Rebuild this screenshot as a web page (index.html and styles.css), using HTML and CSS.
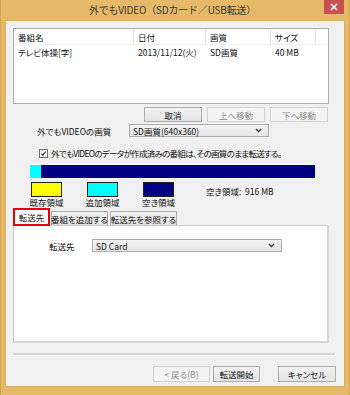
FILE: index.html
```html
<!DOCTYPE html>
<html lang="ja">
<head>
<meta charset="utf-8">
<link rel="stylesheet" href="styles.css">
</head>
<body>
<div class="window">
  <div class="titlebar">
    <div class="spacer"></div>
    <div class="title">外でもVIDEO（SDカード／USB転送）</div>
    <div class="close"><svg width="8" height="8" viewBox="0 0 8 8"><path d="M1 1L7 7M7 1L1 7" stroke="#fff" stroke-width="1.6"/></svg></div>
  </div>
  <div class="client">
    <div class="list">
      <div class="list-head">
        <div class="col c1">番組名</div>
        <div class="col c2">日付</div>
        <div class="col c3">画質</div>
        <div class="col c4">サイズ</div>
        <div class="col c5"></div>
      </div>
      <div class="list-row">
        <div class="col c1">テレビ体操[字]</div>
        <div class="col c2">2013/11/12(火)</div>
        <div class="col c3">SD画質</div>
        <div class="col c4">40 MB</div>
      </div>
    </div>

    <div class="btn-row">
      <div class="btn">取消</div>
      <div class="btn disabled">上へ移動</div>
      <div class="btn disabled">下へ移動</div>
    </div>

    <div class="quality-row">
      <div class="q-label">外でもVIDEOの画質</div>
      <div class="select q-select">
        <span>SD画質(640x360)</span>
        <svg width="7" height="5" viewBox="0 0 7 5"><path d="M1 1L3.5 3.5L6 1" fill="none" stroke="#333" stroke-width="1.3"/></svg>
      </div>
    </div>

    <div class="check-row">
      <span class="checkbox"><svg width="9" height="9" viewBox="0 0 9 9"><path d="M1.8 4.6L3.7 6.5L7.3 2.2" fill="none" stroke="#222" stroke-width="1.5"/></svg></span>
      <span class="check-text">外でもVIDEOのデータが作成済みの番組は、その画質のまま転送する。</span>
    </div>

    <div class="bar"><div class="bar-used"></div></div>

    <div class="legend">
      <div class="legend-item"><div class="swatch yellow"></div><div class="legend-label">既存領域</div></div>
      <div class="legend-item"><div class="swatch cyan"></div><div class="legend-label">追加領域</div></div>
      <div class="legend-item"><div class="swatch navy"></div><div class="legend-label">空き領域</div></div>
      <div class="free">空き領域:&nbsp; 916 MB</div>
    </div>

    <div class="tabs">
      <div class="tab active">転送先</div>
      <div class="tab t2">番組を追加する</div>
      <div class="tab t3">転送先を参照する</div>
    </div>
    <div class="panel">
      <div class="dest-row">
        <div class="d-label">転送先</div>
        <div class="select d-select">
          <span>SD Card</span>
          <svg width="7" height="5" viewBox="0 0 7 5"><path d="M1 1L3.5 3.5L6 1" fill="none" stroke="#333" stroke-width="1.3"/></svg>
        </div>
      </div>
    </div>

    <div class="sep"></div>

    <div class="footer">
      <div class="btn disabled back">&lt; 戻る(B)</div>
      <div class="btn start">転送開始</div>
      <div class="btn cancel">キャンセル</div>
    </div>
  </div>
</div>
</body>
</html>
```

FILE: styles.css
```css
* { box-sizing: border-box; }
html, body { margin: 0; padding: 0; }
body {
  width: 350px;
  height: 395px;
  overflow: hidden;
  font-family: "Noto Sans CJK JP", "Noto Sans", sans-serif;
  font-size: 8.5px;
  font-feature-settings: "palt";
  color: #111;
}
.window {
  width: 350px;
  height: 395px;
  background: #E5B968;
  display: flex;
  flex-direction: column;
  padding: 0 5px 8px 5px;
  border-left: 1px solid #D3A453;
  border-right: 1px solid #D3A453;
}
.titlebar {
  height: 20px;
  display: grid;
  grid-template-columns: 20px 1fr 20px;
}
.title {
  text-align: center;
  font-size: 10px;
  font-feature-settings: normal;
  line-height: 20px;
  color: #3a3a3a;
  padding-right: 5px;
  letter-spacing: -0.2px;
}
.close {
  width: 20px;
  height: 14px;
  background: #C75050;
  display: flex;
  align-items: center;
  justify-content: center;
}
.client {
  flex: 1;
  background: #F0F0F0;
  display: flex;
  flex-direction: column;
  border: 1px solid #D8AE61;
  margin: 0 -1px;
}
.list {
  margin: 7px 0 0 7px;
  width: 316px;
  height: 76px;
  background: #fff;
  border: 1px solid #ABADB3;
}
.list-head, .list-row {
  display: flex;
  height: 16px;
  align-items: center;
}
.list-head { border-bottom: 1px solid #F0F0F0; }
.list-row { height: 14px; }
.col { padding-left: 4px; white-space: nowrap; height: 100%; display: flex; align-items: center; }
.list-head .col { border-right: 1px solid #E5E5E5; }
.c1 { width: 120px; }
.c2 { width: 72px; }
.c3 { width: 65px; }
.c4 { width: 45px; }
.c5 { flex: 1; border-right: none !important; }

.btn {
  height: 15px;
  border: 1px solid #ACACAC;
  background: linear-gradient(#F2F2F2, #E4E4E4);
  display: flex;
  align-items: center;
  justify-content: center;
  color: #111;
}
.btn.disabled {
  border-color: #D0D0D0;
  background: #F4F4F4;
  color: #8A8A8A;
}
.btn-row {
  display: flex;
  justify-content: flex-end;
  gap: 5px;
  padding-right: 16px;
  margin-top: 3px;
}
.btn-row .btn { width: 58px; }

.quality-row {
  display: flex;
  align-items: center;
  margin-top: 2px;
  height: 13px;
}
.q-label { width: 123px; padding-left: 31px; }
.select {
  height: 13px;
  border: 1px solid #ACACAC;
  background: linear-gradient(#F3F3F3, #E6E6E6);
  display: flex;
  align-items: center;
  justify-content: space-between;
  padding: 0 6px 0 3px;
}
.q-select { width: 140px; }

.check-row {
  display: flex;
  align-items: center;
  gap: 3px;
  margin-top: 10px;
  height: 12px;
  padding-left: 33px;
}
.check-text { letter-spacing: -0.7px; white-space: nowrap; }
.checkbox {
  width: 9px;
  height: 9px;
  border: 1px solid #707070;
  background: #fff;
  display: flex;
  align-items: center;
  justify-content: center;
}
.checkbox svg { display: block; }

.bar {
  margin: 5px 0 0 24px;
  width: 285px;
  height: 15px;
  background: #000080;
  border-top: 1px solid #fff;
  border-bottom: 1px solid #fff;
  display: flex;
}
.bar-used { width: 11px; background: #00FFFF; }

.legend {
  display: flex;
  gap: 21px;
  padding-left: 23px;
  margin-top: 3px;
  height: 26px;
}
.legend-item {
  width: 35px;
  display: flex;
  flex-direction: column;
  align-items: center;
}
.swatch { width: 31px; height: 15px; border: 1px solid #222; }
.yellow { background: #FFFF00; }
.cyan { background: #00FFFF; }
.navy { background: #000080; }
.legend-label { line-height: 11px; white-space: nowrap; }
.free { margin: 3px 0 0 9px; white-space: nowrap; }

.tabs {
  display: flex;
  align-items: flex-end;
  margin: 0 0 -1px 7px;
  height: 18px;
}
.tab {
  height: 15px;
  border: 1px solid #ACACAC;
  background: linear-gradient(#F2F2F2, #E4E4E4);
  display: flex;
  align-items: center;
  justify-content: center;
  white-space: nowrap;
}
.tab.active {
  width: 37px;
  height: 18px;
  border: 2px solid #E8000B;
  background: #fff;
  position: relative;
  z-index: 2;
  padding-bottom: 1px;
}
.t2 { width: 57px; margin-left: 1px; }
.t3 { width: 67px; margin-left: 2px; }

.panel {
  margin-left: 7px;
  width: 316px;
  height: 118px;
  background: #fff;
  border: 1px solid #C9C9C9;
  border-right: 2px solid #D6D6D6;
  border-bottom: 2px solid #D6D6D6;
}
.dest-row {
  display: flex;
  align-items: center;
  margin-top: 13px;
  height: 13px;
}
.d-label { width: 78px; padding-left: 35px; }
.d-select { width: 190px; }

.sep {
  margin: 10px 0 0 7px;
  width: 322px;
  height: 3px;
  border-top: 2px solid #D4D4D4;
  border-bottom: 1px solid #fff;
}
.footer {
  display: flex;
  margin-top: 10px;
  padding-left: 147px;
}
.footer .btn { height: 16px; }
.back { width: 57px; }
.start { width: 47px; margin-left: 3px; }
.cancel { width: 58px; margin-left: 18px; }
```
